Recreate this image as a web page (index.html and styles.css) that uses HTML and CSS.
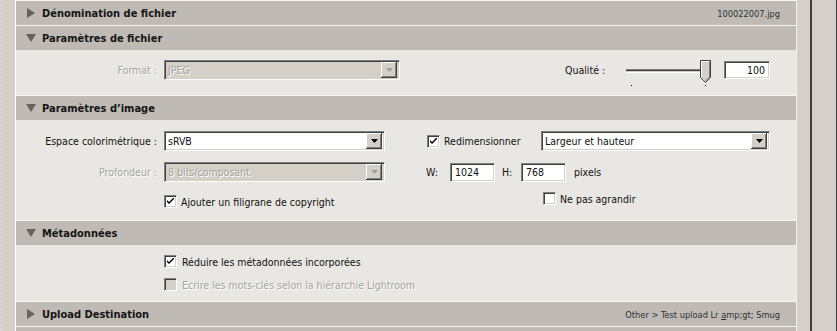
FILE: index.html
```html
<!DOCTYPE html>
<html>
<head>
  <title>Exporter</title>
  <link rel="stylesheet" href="styles.css">
</head>
<body>
  <div class="window">
    <div class="gutter"></div>

    <div class="panel">
      <div class="hdr">
        <svg class="tri" width="10" height="10" viewBox="0 0 10 10"><polygon points="1,0 9,5 1,10" /></svg>
        <span class="title">Dénomination de fichier</span>
        <span class="summary">100022007.jpg</span>
      </div>

      <div class="hdr">
        <svg class="tri" width="10" height="10" viewBox="0 0 10 10"><polygon points="0,1 10,1 5,9" /></svg>
        <span class="title">Paramètres de fichier</span>
      </div>
      <div class="body body-file">
        <div class="row">
          <label class="lbl off">Format :</label>
          <div class="sel off w236"><span class="val">JPEG</span><span class="btn"><svg width="7" height="4" viewBox="0 0 7 4"><polygon points="0,0 7,0 3.5,4" /></svg></span></div>
          <label class="lbl-q">Qualité :</label>
          <svg class="slider" width="88" height="27" viewBox="0 0 88 27">
            <rect x="2" y="9" width="76" height="1" fill="#808080" />
            <rect x="2" y="10" width="76" height="1" fill="#404040" />
            <rect x="2" y="11" width="76" height="1" fill="#d4d0c8" />
            <rect x="2" y="12" width="76" height="1" fill="#ffffff" />
            <rect x="7" y="25" width="1" height="1" fill="#000" />
            <rect x="81" y="25" width="1" height="1" fill="#000" />
            <path d="M76.5 0.5 H86.5 V17.5 L81.5 22.5 L76.5 17.5 Z" fill="#d4d0c8" stroke="#404040" />
            <path d="M77.5 17 V1.5 H85.5" fill="none" stroke="#ffffff" />
            <path d="M85.5 1.5 V17 L81.5 21" fill="none" stroke="#808080" />
          </svg>
          <div class="txt num w46">100</div>
        </div>
      </div>

      <div class="hdr">
        <svg class="tri" width="10" height="10" viewBox="0 0 10 10"><polygon points="0,1 10,1 5,9" /></svg>
        <span class="title">Paramètres d’image</span>
      </div>
      <div class="body body-image">
        <div class="row">
          <label class="lbl">Espace colorimétrique :</label>
          <div class="sel w221"><span class="val">sRVB</span><span class="btn"><svg width="7" height="4" viewBox="0 0 7 4"><polygon points="0,0 7,0 3.5,4" /></svg></span></div>
          <div class="check resize">
            <span class="cb"><svg width="7" height="7" viewBox="0 0 7 7"><path d="M0 2 L0 4 L2 6 L7 1 L7 -1 L2 4 Z" /></svg></span>
            <span>Redimensionner</span>
          </div>
          <div class="sel w229"><span class="val">Largeur et hauteur</span><span class="btn"><svg width="7" height="4" viewBox="0 0 7 4"><polygon points="0,0 7,0 3.5,4" /></svg></span></div>
        </div>
        <div class="row">
          <label class="lbl off">Profondeur :</label>
          <div class="sel off w221"><span class="val">8 bits/composant</span><span class="btn"><svg width="7" height="4" viewBox="0 0 7 4"><polygon points="0,0 7,0 3.5,4" /></svg></span></div>
          <span class="dim dim-w">W:</span>
          <div class="txt w45">1024</div>
          <span class="dim dim-h">H:</span>
          <div class="txt w45">768</div>
          <span class="unit">pixels</span>
        </div>
        <div class="row row-top">
          <div class="check copyright">
            <span class="cb"><svg width="7" height="7" viewBox="0 0 7 7"><path d="M0 2 L0 4 L2 6 L7 1 L7 -1 L2 4 Z" /></svg></span>
            <span>Ajouter un filigrane de copyright</span>
          </div>
          <div class="check enlarge">
            <span class="cb"></span>
            <span>Ne pas agrandir</span>
          </div>
        </div>
      </div>

      <div class="hdr">
        <svg class="tri" width="10" height="10" viewBox="0 0 10 10"><polygon points="0,1 10,1 5,9" /></svg>
        <span class="title">Métadonnées</span>
      </div>
      <div class="body body-meta">
        <div class="check meta">
          <span class="cb"><svg width="7" height="7" viewBox="0 0 7 7"><path d="M0 2 L0 4 L2 6 L7 1 L7 -1 L2 4 Z" /></svg></span>
          <span>Réduire les métadonnées incorporées</span>
        </div>
        <div class="check meta off">
          <span class="cb"></span>
          <span>Ecrire les mots-clés selon la hiérarchie Lightroom</span>
        </div>
      </div>

      <div class="hdr">
        <svg class="tri" width="10" height="10" viewBox="0 0 10 10"><polygon points="1,0 9,5 1,10" /></svg>
        <span class="title">Upload Destination</span>
        <span class="summary">Other &gt; Test upload Lr <u>a</u>mp;gt; Smug</span>
      </div>
      <div class="hdr"></div>
    </div>

    <div class="scroll-a"></div>
    <div class="scroll-b"></div>
  </div>
</body>
</html>
```

FILE: styles.css
```css
:root {
  --face: #d4d0c8;
  --hdr-bg: #bfbab4;
  --body-bg: #e9e7e3;
  --shadow: #808080;
  --dark: #404040;
  --off-text: #a5a39e;
}

body {
  margin: 0;
  padding: 0;
  background-color: var(--face);
  font-family: "DejaVu Sans Condensed", "Liberation Sans", sans-serif;
  font-size: 10.5px;
  color: #111;
  overflow: hidden;
}

.window {
  display: flex;
  height: 331px;
  overflow: hidden;
}

.gutter {
  width: 12px;
  border-left: 3px solid transparent;
  border-right: 1px solid #fff;
  background:
    linear-gradient(var(--face), var(--face)) padding-box,
    repeating-conic-gradient(#c4c0b8 0 25%, #e8e6e0 0 50%) 0 0 / 2px 2px border-box;
}

.panel {
  width: 780px;
  display: flex;
  flex-direction: column;
  flex-shrink: 0;
}

.scroll-a {
  width: 13px;
  border-left: 1px solid #f4f3f0;
  border-right: 2px solid var(--dark);
}

.scroll-b {
  width: 24px;
  border-right: 1px solid var(--dark);
}

/* section headers */
.hdr {
  height: 24px;
  flex-shrink: 0;
  border-top: 1px solid #f7f6f3;
  background-color: var(--hdr-bg);
  display: flex;
  align-items: center;
  padding: 0 16px 0 10px;
}

.tri {
  fill: #66625d;
  margin-right: 6px;
}

.title {
  font-weight: bold;
  font-size: 11px;
  color: #151515;
}

.summary {
  margin-left: auto;
  font-size: 9.2px;
  color: #2a3333;
}

/* section bodies */
.body {
  background-color: var(--body-bg);
  box-sizing: border-box;
  flex-shrink: 0;
}

.body-file {
  height: 45px;
  padding-top: 10px;
}

.body-image {
  height: 100px;
  padding-top: 11px;
  display: flex;
  flex-direction: column;
  gap: 11px;
}

.body-image .row:last-child {
  margin-top: -1px;
}

.body-meta {
  height: 56px;
  padding: 10px 0 0 148px;
  display: flex;
  flex-direction: column;
  gap: 10px;
}

.row {
  display: flex;
  align-items: center;
  height: 20px;
}

.row-top {
  align-items: flex-start;
  height: 18px;
}

.body-file .row {
  align-items: flex-start;
}

.lbl {
  width: 148px;
  box-sizing: border-box;
  padding-right: 7px;
  text-align: right;
  line-height: 20px;
  flex-shrink: 0;
}

.off,
.off .val {
  color: var(--off-text);
  text-shadow: 1px 1px 0 #fff;
}

.lbl-q {
  margin-left: 165px;
  width: 59px;
  line-height: 20px;
}

/* combo boxes */
.sel {
  display: flex;
  align-items: center;
  height: 20px;
  box-sizing: border-box;
  border: 1px solid;
  border-color: var(--shadow) #fff #fff var(--shadow);
  box-shadow: inset 1px 1px var(--dark), inset -1px -1px var(--face);
  background-color: #fff;
  padding: 0 2px 0 3px;
  flex-shrink: 0;
}

.sel.off {
  background-color: var(--face);
}

.sel .val {
  flex: 1;
  white-space: nowrap;
}

.sel .btn {
  width: 16px;
  height: 16px;
  box-sizing: border-box;
  background-color: var(--face);
  box-shadow: inset -1px -1px var(--dark), inset 1px 1px #fff, inset -2px -2px var(--shadow);
  display: flex;
  align-items: center;
  justify-content: center;
}

.sel .btn svg {
  fill: #000;
}

.sel.off .btn svg {
  fill: #a0a0a0;
}

.w236 { width: 236px; }
.w221 { width: 221px; }
.w229 { width: 229px; }
.w46 { width: 46px; }
.w45 { width: 45px; }

/* text fields */
.txt {
  height: 19px;
  box-sizing: border-box;
  border: 1px solid;
  border-color: var(--shadow) #fff #fff var(--shadow);
  box-shadow: inset 1px 1px var(--dark), inset -1px -1px var(--face);
  background-color: #fff;
  padding: 0 4px;
  line-height: 17px;
  flex-shrink: 0;
}

.txt.num {
  text-align: right;
  margin: 1px 0 0 12px;
  height: 18px;
  line-height: 16px;
}

.slider {
  flex-shrink: 0;
}

.dim {
  flex-shrink: 0;
}

.dim-w {
  margin-left: 41px;
  width: 24px;
}

.dim-h {
  margin-left: 7px;
  width: 19px;
}

.unit {
  margin-left: 8px;
}

/* check boxes */
.check {
  display: flex;
  align-items: center;
  gap: 4px;
  height: 13px;
  white-space: nowrap;
}

.cb {
  width: 13px;
  height: 13px;
  box-sizing: border-box;
  border: 1px solid;
  border-color: var(--shadow) #fff #fff var(--shadow);
  box-shadow: inset 1px 1px var(--dark), inset -1px -1px var(--face);
  background-color: #fff;
  display: flex;
  align-items: center;
  justify-content: center;
  flex-shrink: 0;
}

.cb svg {
  fill: #000;
}

.check.off .cb {
  background-color: var(--face);
}

.resize {
  margin-left: 42px;
  width: 114px;
}

.copyright {
  margin: 3px 0 0 148px;
  width: 379px;
  flex-shrink: 0;
}

.enlarge {
  margin-left: 0;
}

.meta {
  gap: 5px;
}
```
